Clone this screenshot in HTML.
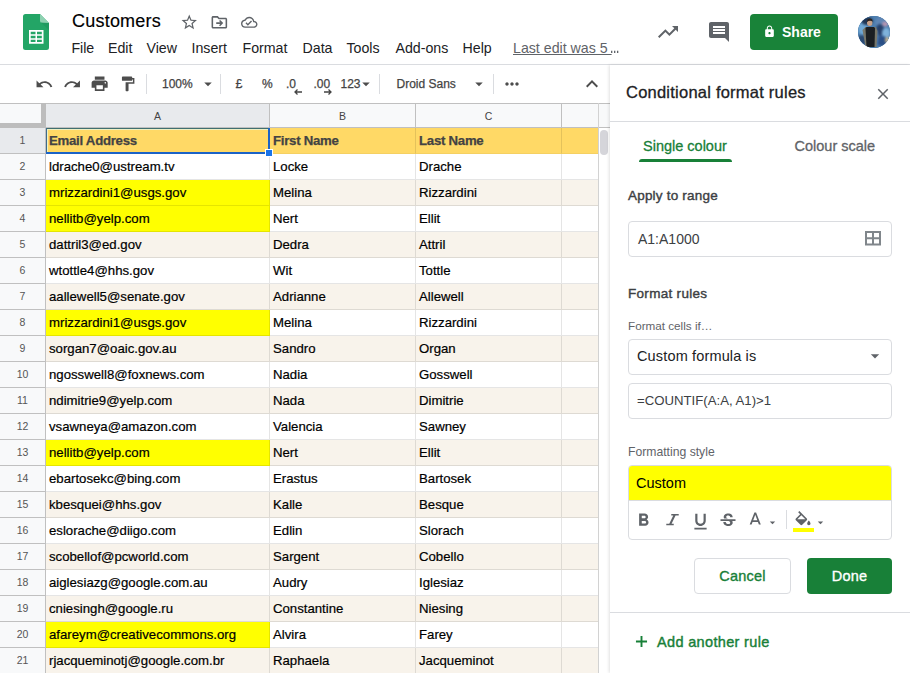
<!DOCTYPE html>
<html lang="en">
<head>
<meta charset="utf-8">
<title>Customers</title>
<style>
*{box-sizing:border-box;margin:0;padding:0}
html,body{width:910px;height:673px;overflow:hidden;background:#fff}
body{font-family:"Liberation Sans",sans-serif;color:#202124;position:relative}
.abs{position:absolute}
svg{display:block;overflow:visible}
#hdr{left:0;top:0;width:910px;height:65px;background:#fff;border-bottom:1px solid #dadce0}
#title{left:72px;top:10px;font-size:18px;line-height:22px;color:#000;white-space:nowrap;letter-spacing:.22px;-webkit-text-stroke:.15px #000}
.menu{top:39px;font-size:14.2px;line-height:18px;color:#202124;white-space:nowrap}
#lastedit{left:513px;top:39px;font-size:14.2px;line-height:18px;color:#5f6368;white-space:pre}
#share{left:750px;top:14px;width:88px;height:36px;background:#198339;border-radius:4px;color:#fff;font-weight:bold;font-size:14px;line-height:36px}
#share span{position:absolute;left:32px;top:0}
#avatar{left:858px;top:16px;width:32px;height:32px;border-radius:50%;overflow:hidden;background:#4a6c8c}
#tb{left:0;top:65px;width:610px;height:38px;background:#fff}
.tbt{top:76px;font-size:12px;line-height:16px;color:#444;white-space:nowrap;-webkit-text-stroke:.25px #444}
.sep{top:74px;width:1px;height:20px;background:#dadce0}
#grid{left:0;top:103px;width:610px;height:570px;background:#fff;overflow:hidden}
.colh{top:0;height:25px;background:#f8f9fa;border-right:1px solid #c0c0c0;border-top:1px solid #c0c0c0;border-bottom:1px solid #c0c0c0;font-size:10.500px;color:#444;text-align:center;line-height:24px}
.rowh{left:0;width:46px;height:26px;background:#f8f9fa;border-right:1px solid #c0c0c0;border-bottom:1px solid #c0c0c0;font-size:10.500px;color:#555;text-align:center;line-height:25px}
.cell{height:26px;border-right:1px solid rgba(0,0,0,.1);border-bottom:1px solid rgba(0,0,0,.1);font-size:13.2px;line-height:25px;padding-left:3px;color:#000;white-space:nowrap;overflow:hidden;-webkit-text-stroke:.2px #000}
.cell.h{font-weight:bold;color:#434343;background:#ffd966;letter-spacing:-.25px;-webkit-text-stroke:.25px #434343;border-bottom-color:rgba(0,0,0,.04)}
.cell.b{background:#f8f3eb}
.cell.y{background:#ffff00}
#side{left:610px;top:65px;width:300px;height:608px;background:#fff;box-shadow:-1px 0 3px rgba(0,0,0,.12)}
.sl{font-size:12px;color:#5f6368;white-space:nowrap}
.box{border:1px solid #dadce0;border-radius:4px;background:#fff}
</style>
</head>
<body>
<div id="hdr" class="abs"></div>

<svg class="abs" style="left:23px;top:14px" width="26" height="36" viewBox="0 0 26 36">
<path d="M2.5 0H17l9 9v24.5a2.500 2.500 0 0 1-2.500 2.500h-21A2.500 2.500 0 0 1 0 33.500v-31A2.500 2.500 0 0 1 2.500 0z" fill="#23a566"/>
<path d="M17 0l9 9h-6.500A2.500 2.500 0 0 1 17 6.500z" fill="#8ed1b1"/>
<path d="M17.700 8.300L26 16V9z" fill="#1c8f5a" opacity=".5"/>
<path d="M6 16v13.800h14.500V16zm1.700 1.700h4.800v2.470H7.700zm6.300 0h4.800v2.470H14zm-6.300 3.970h4.800v2.470H7.700zm6.300 0h4.800v2.470H14zm-6.300 3.960h4.800v2.470H7.700zm6.300 0h4.800v2.470H14z" fill="#fff" fill-rule="evenodd"/>
</svg>
<div id="title" class="abs">Customers</div>
<svg class="abs" style="left:179.7px;top:12.6px" width="18.5" height="18.5" viewBox="0 0 24 24" ><path fill="#5f6368" d="M22 9.24l-7.19-.62L12 2 9.19 8.63 2 9.24l5.46 4.73L5.82 21 12 17.27 18.18 21l-1.63-7.03L22 9.24zM12 15.4l-3.76 2.27 1-4.28-3.32-2.88 4.38-.38L12 6.1l1.71 4.04 4.38.38-3.32 2.88 1 4.28L12 15.4z"/></svg>
<svg class="abs" style="left:209.5px;top:12.8px" width="18.7" height="18.7" viewBox="0 0 24 24" ><path fill="#5f6368" d="M20 6h-8l-2-2H4c-1.1 0-2 .9-2 2v12c0 1.1.9 2 2 2h16c1.1 0 2-.9 2-2V8c0-1.1-.9-2-2-2zm0 12H4V6h5.17l2 2H20v10zM8 12h5.2l-1.6-1.6L13 9l4 4-4 4-1.4-1.4 1.6-1.6H8z"/></svg>
<svg class="abs" style="left:240.6px;top:14.2px" width="16.5" height="16.5" viewBox="0 0 24 24" ><path fill="#5f6368" d="M19.35 10.04C18.67 6.59 15.64 4 12 4 9.11 4 6.6 5.64 5.35 8.04 2.34 8.36 0 10.91 0 14c0 3.31 2.69 6 6 6h13c2.76 0 5-2.24 5-5 0-2.64-2.05-4.78-4.65-4.96zM19 18H6c-2.21 0-4-1.79-4-4 0-2.05 1.53-3.76 3.56-3.97l1.07-.11.5-.95C8.08 7.14 9.94 6 12 6c2.62 0 4.88 1.86 5.39 4.43l.3 1.5 1.53.11c1.56.1 2.78 1.41 2.78 2.96 0 1.65-1.35 3-3 3zm-9-3.82l-2.09-2.09L6.5 13.5 10 17l6.01-6.01-1.41-1.41z"/></svg>
<div class="abs menu" style="left:71.4px">File</div>
<div class="abs menu" style="left:108px">Edit</div>
<div class="abs menu" style="left:146.5px">View</div>
<div class="abs menu" style="left:191.5px">Insert</div>
<div class="abs menu" style="left:242.5px">Format</div>
<div class="abs menu" style="left:302.5px">Data</div>
<div class="abs menu" style="left:346.5px">Tools</div>
<div class="abs menu" style="left:395.5px">Add-ons</div>
<div class="abs menu" style="left:462.5px">Help</div>
<div id="lastedit" class="abs"><span style="text-decoration:underline">Last edit was 5 </span><span style="display:inline-block;transform:scaleX(.66);transform-origin:0 50%;margin-left:-2px;font-weight:bold">…</span></div>
<svg class="abs" style="left:656px;top:20px" width="24" height="24" viewBox="0 0 24 24" ><path fill="#5f6368" d="M16 6l2.29 2.29-4.88 4.88-4-4L2 16.59 3.41 18l6-6 4 4 6.3-6.29L22 12V6z"/></svg>
<svg class="abs" style="left:707px;top:20px" width="24" height="24" viewBox="0 0 24 24" ><path fill="#5f6368" d="M21.99 4c0-1.1-.89-2-1.99-2H4c-1.1 0-2 .9-2 2v12c0 1.1.9 2 2 2h14l4 4-.01-18zM18 14H6v-2h12v2zm0-3H6V9h12v2zm0-3H6V6h12v2z"/></svg>
<div id="share" class="abs"><svg class="abs" style="left:13px;top:11px" width="13" height="13" viewBox="0 0 24 24"><path fill="#fff" d="M18 8h-1V6c0-2.76-2.24-5-5-5S7 3.24 7 6v2H6c-1.1 0-2 .9-2 2v10c0 1.1.9 2 2 2h12c1.1 0 2-.9 2-2V10c0-1.1-.9-2-2-2zm-6 9c-1.1 0-2-.9-2-2s.9-2 2-2 2 .9 2 2-.9 2-2 2zm3.1-9H8.9V6c0-1.71 1.39-3.1 3.1-3.1 1.71 0 3.1 1.39 3.1 3.1v2z"/></svg><span>Share</span></div>
<div id="avatar" class="abs"><svg width="32" height="32" viewBox="0 0 32 32"><rect width="32" height="32" fill="#4d7fb0"/><g style="filter:blur(.8px)">
<ellipse cx="5" cy="12" rx="5" ry="7" fill="#6fa8d6"/><ellipse cx="4" cy="24" rx="5" ry="5" fill="#2b4a73"/><ellipse cx="9" cy="5" rx="6" ry="4" fill="#1f3554"/>
<ellipse cx="24" cy="6" rx="7" ry="5" fill="#5f86b5"/><ellipse cx="27" cy="8" rx="3" ry="2.500" fill="#b595b0"/><ellipse cx="22" cy="14" rx="4" ry="6" fill="#27416b"/>
<ellipse cx="28" cy="17" rx="4" ry="5" fill="#7fb3dc"/><ellipse cx="24" cy="25" rx="6" ry="5" fill="#2a4f86"/><ellipse cx="29" cy="24" rx="2" ry="3" fill="#c8b48f"/><ellipse cx="18.500" cy="22" rx="2" ry="8" fill="#4f79a8"/></g>
<path d="M4.500 14l3-3h10.500l1.500 4-1 16h-11z" fill="#77776b"/>
<path d="M7.500 12.500c0-1 1-1.500 2-1.500h5.500c1 0 2 .5 2 1.500l-.5 18.500h-8z" fill="#1b1f23"/>
<ellipse cx="11.700" cy="6.700" rx="2.700" ry="3.300" fill="#c7a189"/><path d="M8.800 6.200c0-2.500 1.300-3.700 3-3.700s3 1.200 2.800 3.300c-1.500-1.300-4-1.300-5.800.4z" fill="#2b2420"/>
</svg></div>
<div id="tb" class="abs"></div>
<svg class="abs" style="left:34.75px;top:74.75px" width="18.5" height="18.5" viewBox="0 0 24 24" ><path fill="#4d4d4d" d="M12.5 8c-2.65 0-5.05.99-6.9 2.6L2 7v9h9l-3.62-3.62c1.39-1.16 3.16-1.88 5.12-1.88 3.54 0 6.55 2.31 7.6 5.5l2.37-.78C21.08 11.03 17.15 8 12.5 8z"/></svg>
<svg class="abs" style="left:62.95px;top:74.75px" width="18.5" height="18.5" viewBox="0 0 24 24" ><path fill="#4d4d4d" d="M18.4 10.6C16.55 8.99 14.15 8 11.5 8c-4.65 0-8.58 3.03-9.96 7.22L3.9 16c1.05-3.19 4.05-5.5 7.6-5.5 1.95 0 3.73.72 5.12 1.88L13 16h9V7l-3.6 3.6z"/></svg>
<svg class="abs" style="left:90.35px;top:74.2px" width="19.3" height="19.3" viewBox="0 0 24 24" ><path fill="#4d4d4d" d="M19 8H5c-1.66 0-3 1.34-3 3v6h4v4h12v-4h4v-6c0-1.66-1.34-3-3-3zm-3 11H8v-5h8v5zm3-7c-.55 0-1-.45-1-1s.45-1 1-1 1 .45 1 1-.45 1-1 1zm-1-9H6v4h12V3z"/></svg>
<svg class="abs" style="left:119.3px;top:75.2px" width="17.6" height="17.6" viewBox="0 0 24 24" ><path fill="#4d4d4d" d="M18 4V3c0-.55-.45-1-1-1H5c-.55 0-1 .45-1 1v4c0 .55.45 1 1 1h12c.55 0 1-.45 1-1V6h1v4H9v11c0 .55.45 1 1 1h2c.55 0 1-.45 1-1v-9h8V4h-3z"/></svg>
<div class="abs sep" style="left:146px"></div>
<div class="abs tbt" style="left:162px">100%</div>
<svg class="abs" style="left:199px;top:75px" width="18" height="18" viewBox="0 0 24 24" ><path fill="#4d4d4d" d="M7 10l5 5 5-5z"/></svg>
<div class="abs sep" style="left:220px"></div>
<div class="abs tbt" style="left:235.500px;font-size:12.500px">£</div>
<div class="abs tbt" style="left:262px">%</div>
<div class="abs tbt" style="left:286px">.0</div>
<svg class="abs" style="left:293px;top:88px" width="10" height="8" viewBox="0 0 10 8"><path d="M9 4H2M4.500 1.500L2 4l2.500 2.500" stroke="#444" stroke-width="1.300" fill="none"/></svg>
<div class="abs tbt" style="left:313.500px">.00</div>
<svg class="abs" style="left:323px;top:88px" width="10" height="8" viewBox="0 0 10 8"><path d="M1 4h7M5.500 1.500L8 4 5.500 6.500" stroke="#444" stroke-width="1.300" fill="none"/></svg>
<div class="abs tbt" style="left:340.500px">123</div>
<svg class="abs" style="left:357px;top:75px" width="18" height="18" viewBox="0 0 24 24" ><path fill="#4d4d4d" d="M7 10l5 5 5-5z"/></svg>
<div class="abs sep" style="left:379px"></div>
<div class="abs tbt" style="left:396.500px">Droid Sans</div>
<svg class="abs" style="left:470px;top:75px" width="18" height="18" viewBox="0 0 24 24" ><path fill="#4d4d4d" d="M7 10l5 5 5-5z"/></svg>
<div class="abs sep" style="left:493px"></div>
<svg class="abs" style="left:502px;top:74px" width="20" height="20" viewBox="0 0 24 24" ><path fill="#4d4d4d" d="M6 10c-1.1 0-2 .9-2 2s.9 2 2 2 2-.9 2-2-.9-2-2-2zm12 0c-1.1 0-2 .9-2 2s.9 2 2 2 2-.9 2-2-.9-2-2-2zm-6 0c-1.1 0-2 .9-2 2s.9 2 2 2 2-.9 2-2-.9-2-2-2z"/></svg>
<svg class="abs" style="left:580px;top:72px" width="24" height="24" viewBox="0 0 24 24" ><path fill="#4d4d4d" d="M12 8l-6 6 1.41 1.41L12 10.83l4.59 4.58L18 14z"/></svg>
<div id="grid" class="abs">
<div class="abs" style="left:0;top:0;width:46px;height:25px;background:#f8f9fa;border-top:1px solid #c0c0c0"></div>
<div class="abs" style="left:41px;top:0;width:5px;height:25px;background:#bdbdbd"></div>
<div class="abs" style="left:0;top:20px;width:46px;height:5px;background:#bdbdbd"></div>
<div class="abs colh" style="left:46px;width:224px;background:#e8eaed">A</div>
<div class="abs colh" style="left:270px;width:146px">B</div>
<div class="abs colh" style="left:416px;width:146px">C</div>
<div class="abs colh" style="left:562px;width:37px"></div>
<div class="abs rowh" style="top:25px;background:#e8eaed">1</div>
<div class="abs cell h" style="left:46px;top:25px;width:224px">Email Address</div>
<div class="abs cell h" style="left:270px;top:25px;width:146px">First Name</div>
<div class="abs cell h" style="left:416px;top:25px;width:146px">Last Name</div>
<div class="abs cell h" style="left:562px;top:25px;width:37px"></div>
<div class="abs rowh" style="top:51px">2</div>
<div class="abs cell" style="left:46px;top:51px;width:224px">ldrache0@ustream.tv</div>
<div class="abs cell" style="left:270px;top:51px;width:146px">Locke</div>
<div class="abs cell" style="left:416px;top:51px;width:146px">Drache</div>
<div class="abs cell" style="left:562px;top:51px;width:37px"></div>
<div class="abs rowh" style="top:77px">3</div>
<div class="abs cell b y" style="left:46px;top:77px;width:224px">mrizzardini1@usgs.gov</div>
<div class="abs cell b" style="left:270px;top:77px;width:146px">Melina</div>
<div class="abs cell b" style="left:416px;top:77px;width:146px">Rizzardini</div>
<div class="abs cell b" style="left:562px;top:77px;width:37px"></div>
<div class="abs rowh" style="top:103px">4</div>
<div class="abs cell y" style="left:46px;top:103px;width:224px">nellitb@yelp.com</div>
<div class="abs cell" style="left:270px;top:103px;width:146px">Nert</div>
<div class="abs cell" style="left:416px;top:103px;width:146px">Ellit</div>
<div class="abs cell" style="left:562px;top:103px;width:37px"></div>
<div class="abs rowh" style="top:129px">5</div>
<div class="abs cell b" style="left:46px;top:129px;width:224px">dattril3@ed.gov</div>
<div class="abs cell b" style="left:270px;top:129px;width:146px">Dedra</div>
<div class="abs cell b" style="left:416px;top:129px;width:146px">Attril</div>
<div class="abs cell b" style="left:562px;top:129px;width:37px"></div>
<div class="abs rowh" style="top:155px">6</div>
<div class="abs cell" style="left:46px;top:155px;width:224px">wtottle4@hhs.gov</div>
<div class="abs cell" style="left:270px;top:155px;width:146px">Wit</div>
<div class="abs cell" style="left:416px;top:155px;width:146px">Tottle</div>
<div class="abs cell" style="left:562px;top:155px;width:37px"></div>
<div class="abs rowh" style="top:181px">7</div>
<div class="abs cell b" style="left:46px;top:181px;width:224px">aallewell5@senate.gov</div>
<div class="abs cell b" style="left:270px;top:181px;width:146px">Adrianne</div>
<div class="abs cell b" style="left:416px;top:181px;width:146px">Allewell</div>
<div class="abs cell b" style="left:562px;top:181px;width:37px"></div>
<div class="abs rowh" style="top:207px">8</div>
<div class="abs cell y" style="left:46px;top:207px;width:224px">mrizzardini1@usgs.gov</div>
<div class="abs cell" style="left:270px;top:207px;width:146px">Melina</div>
<div class="abs cell" style="left:416px;top:207px;width:146px">Rizzardini</div>
<div class="abs cell" style="left:562px;top:207px;width:37px"></div>
<div class="abs rowh" style="top:233px">9</div>
<div class="abs cell b" style="left:46px;top:233px;width:224px">sorgan7@oaic.gov.au</div>
<div class="abs cell b" style="left:270px;top:233px;width:146px">Sandro</div>
<div class="abs cell b" style="left:416px;top:233px;width:146px">Organ</div>
<div class="abs cell b" style="left:562px;top:233px;width:37px"></div>
<div class="abs rowh" style="top:259px">10</div>
<div class="abs cell" style="left:46px;top:259px;width:224px">ngosswell8@foxnews.com</div>
<div class="abs cell" style="left:270px;top:259px;width:146px">Nadia</div>
<div class="abs cell" style="left:416px;top:259px;width:146px">Gosswell</div>
<div class="abs cell" style="left:562px;top:259px;width:37px"></div>
<div class="abs rowh" style="top:285px">11</div>
<div class="abs cell b" style="left:46px;top:285px;width:224px">ndimitrie9@yelp.com</div>
<div class="abs cell b" style="left:270px;top:285px;width:146px">Nada</div>
<div class="abs cell b" style="left:416px;top:285px;width:146px">Dimitrie</div>
<div class="abs cell b" style="left:562px;top:285px;width:37px"></div>
<div class="abs rowh" style="top:311px">12</div>
<div class="abs cell" style="left:46px;top:311px;width:224px">vsawneya@amazon.com</div>
<div class="abs cell" style="left:270px;top:311px;width:146px">Valencia</div>
<div class="abs cell" style="left:416px;top:311px;width:146px">Sawney</div>
<div class="abs cell" style="left:562px;top:311px;width:37px"></div>
<div class="abs rowh" style="top:337px">13</div>
<div class="abs cell b y" style="left:46px;top:337px;width:224px">nellitb@yelp.com</div>
<div class="abs cell b" style="left:270px;top:337px;width:146px">Nert</div>
<div class="abs cell b" style="left:416px;top:337px;width:146px">Ellit</div>
<div class="abs cell b" style="left:562px;top:337px;width:37px"></div>
<div class="abs rowh" style="top:363px">14</div>
<div class="abs cell" style="left:46px;top:363px;width:224px">ebartosekc@bing.com</div>
<div class="abs cell" style="left:270px;top:363px;width:146px">Erastus</div>
<div class="abs cell" style="left:416px;top:363px;width:146px">Bartosek</div>
<div class="abs cell" style="left:562px;top:363px;width:37px"></div>
<div class="abs rowh" style="top:389px">15</div>
<div class="abs cell b" style="left:46px;top:389px;width:224px">kbesquei@hhs.gov</div>
<div class="abs cell b" style="left:270px;top:389px;width:146px">Kalle</div>
<div class="abs cell b" style="left:416px;top:389px;width:146px">Besque</div>
<div class="abs cell b" style="left:562px;top:389px;width:37px"></div>
<div class="abs rowh" style="top:415px">16</div>
<div class="abs cell" style="left:46px;top:415px;width:224px">eslorache@diigo.com</div>
<div class="abs cell" style="left:270px;top:415px;width:146px">Edlin</div>
<div class="abs cell" style="left:416px;top:415px;width:146px">Slorach</div>
<div class="abs cell" style="left:562px;top:415px;width:37px"></div>
<div class="abs rowh" style="top:441px">17</div>
<div class="abs cell b" style="left:46px;top:441px;width:224px">scobellof@pcworld.com</div>
<div class="abs cell b" style="left:270px;top:441px;width:146px">Sargent</div>
<div class="abs cell b" style="left:416px;top:441px;width:146px">Cobello</div>
<div class="abs cell b" style="left:562px;top:441px;width:37px"></div>
<div class="abs rowh" style="top:467px">18</div>
<div class="abs cell" style="left:46px;top:467px;width:224px">aiglesiazg@google.com.au</div>
<div class="abs cell" style="left:270px;top:467px;width:146px">Audry</div>
<div class="abs cell" style="left:416px;top:467px;width:146px">Iglesiaz</div>
<div class="abs cell" style="left:562px;top:467px;width:37px"></div>
<div class="abs rowh" style="top:493px">19</div>
<div class="abs cell b" style="left:46px;top:493px;width:224px">cniesingh@google.ru</div>
<div class="abs cell b" style="left:270px;top:493px;width:146px">Constantine</div>
<div class="abs cell b" style="left:416px;top:493px;width:146px">Niesing</div>
<div class="abs cell b" style="left:562px;top:493px;width:37px"></div>
<div class="abs rowh" style="top:519px">20</div>
<div class="abs cell y" style="left:46px;top:519px;width:224px">afareym@creativecommons.org</div>
<div class="abs cell" style="left:270px;top:519px;width:146px">Alvira</div>
<div class="abs cell" style="left:416px;top:519px;width:146px">Farey</div>
<div class="abs cell" style="left:562px;top:519px;width:37px"></div>
<div class="abs rowh" style="top:545px">21</div>
<div class="abs cell b" style="left:46px;top:545px;width:224px">rjacqueminotj@google.com.br</div>
<div class="abs cell b" style="left:270px;top:545px;width:146px">Raphaela</div>
<div class="abs cell b" style="left:416px;top:545px;width:146px">Jacqueminot</div>
<div class="abs cell b" style="left:562px;top:545px;width:37px"></div>
<div class="abs" style="left:46px;top:25px;width:224px;height:1px;background:#3f6f70"></div>
<div class="abs" style="left:47px;top:26px;width:222px;height:1px;background:#eef0c4"></div>
<div class="abs" style="left:46px;top:25px;width:1px;height:26px;background:#3f6b8c"></div>
<div class="abs" style="left:47px;top:26px;width:1px;height:23px;background:#eef0c4"></div>
<div class="abs" style="left:268px;top:25px;width:2px;height:26px;background:#1b63c7"></div>
<div class="abs" style="left:46px;top:49px;width:224px;height:2px;background:#1b63c7"></div>
<div class="abs" style="left:265px;top:46px;width:8px;height:8px;background:#1a73e8;border:1px solid #fff"></div>
<div class="abs" style="left:598px;top:0;width:12px;height:570px;background:#fff;border-left:1px solid #d2d2d2"></div>
<div class="abs" style="left:599px;top:0;width:11px;height:25px;background:#f8f9fa;border-top:1px solid #c0c0c0;border-bottom:1px solid #c0c0c0"></div>
<div class="abs" style="left:600px;top:27px;width:8px;height:25px;border-radius:4px;background:#d5d5da"></div>
</div>
<div id="side" class="abs">
<div class="abs" style="left:16px;top:16px;font-size:16.500px;line-height:22px;color:#202124;white-space:nowrap;letter-spacing:.23px;-webkit-text-stroke:.3px #202124">Conditional format rules</div>
<svg class="abs" style="left:264px;top:20px" width="18" height="18" viewBox="0 0 24 24" ><path fill="#5f6368" d="M19 6.41L17.59 5 12 10.59 6.41 5 5 6.41 10.59 12 5 17.59 6.41 19 12 13.41 17.59 19 19 17.59 13.41 12z"/></svg>
<div class="abs" style="left:0;top:56px;width:300px;height:1px;background:#dadce0"></div>
<div class="abs" style="left:33px;top:72px;font-size:14.500px;line-height:18px;color:#188038;white-space:nowrap;-webkit-text-stroke:.3px #188038">Single colour</div>
<div class="abs" style="left:29px;top:94px;width:92.500px;height:3px;border-radius:3px 3px 0 0;background:#188038"></div>
<div class="abs" style="left:184.500px;top:72px;font-size:14.500px;line-height:18px;color:#5f6368;white-space:nowrap;-webkit-text-stroke:.3px #5f6368">Colour scale</div>
<div class="abs" style="left:18px;top:122.700px;font-size:13.500px;line-height:16px;color:#3c4043;white-space:nowrap;letter-spacing:.2px;-webkit-text-stroke:.4px #3c4043">Apply to range</div>
<div class="abs box" style="left:18px;top:156px;width:264px;height:36px"></div>
<div class="abs" style="left:28px;top:165px;font-size:14px;line-height:18px;color:#3c4043;white-space:nowrap">A1:A1000</div>
<svg class="abs" style="left:255px;top:166.400px" width="16" height="14.400" viewBox="0 0 16 14.400"><path d="M1 1h14v12.400H1zM8 1v12.400M1 7.200h14" stroke="#80868b" stroke-width="2" fill="none"/></svg>
<div class="abs" style="left:18px;top:220.700px;font-size:13.500px;line-height:16px;color:#3c4043;white-space:nowrap;letter-spacing:.3px;-webkit-text-stroke:.4px #3c4043">Format rules</div>
<div class="abs sl" style="left:18px;top:254px;line-height:14px;font-size:11.700px">Format cells if…</div>
<div class="abs box" style="left:18px;top:274px;width:264px;height:36px"></div>
<div class="abs" style="left:27px;top:282px;font-size:14.500px;line-height:18px;color:#202124;white-space:nowrap;letter-spacing:.15px">Custom formula is</div>
<svg class="abs" style="left:255px;top:281px" width="20" height="20" viewBox="0 0 24 24" ><path fill="#5f6368" d="M7 10l5 5 5-5z"/></svg>
<div class="abs box" style="left:18px;top:318px;width:264px;height:36px"></div>
<div class="abs" style="left:27px;top:327px;font-size:13.200px;line-height:18px;color:#3c4043;white-space:nowrap">=COUNTIF(A:A, A1)&gt;1</div>
<div class="abs sl" style="left:18px;top:380px;line-height:14px;font-size:12.200px">Formatting style</div>
<div class="abs box" style="left:18px;top:400px;width:264px;height:75px;overflow:hidden"><div style="height:35px;background:#ffff00;border-bottom:1px solid #dadce0"></div></div>
<div class="abs" style="left:26px;top:409px;font-size:14.500px;line-height:18px;color:#000;white-space:nowrap">Custom</div>
<svg class="abs" style="left:22.65px;top:445.1px" width="21" height="21" viewBox="0 0 24 24" ><path fill="#5f6368" d="M15.6 10.79c.97-.67 1.65-1.77 1.65-2.79 0-2.26-1.75-4-4-4H7v14h7.04c2.09 0 3.71-1.7 3.71-3.79 0-1.52-.86-2.82-2.15-3.42zM10 6.5h3c.83 0 1.5.67 1.5 1.5s-.67 1.5-1.5 1.5h-3v-3zm3.5 9H10v-3h3.5c.83 0 1.5.67 1.5 1.5s-.67 1.5-1.5 1.5z"/></svg>
<svg class="abs" style="left:51.8px;top:445.25px" width="21" height="21" viewBox="0 0 24 24" ><path fill="#5f6368" d="M10.600 4.700h8.500v1.600H15.500l-4.560 9.400h2.460v1.600H4.900v-1.600H8.300l4.560-9.400H10.600z"/></svg>
<svg class="abs" style="left:79.7px;top:446px" width="21" height="21" viewBox="0 0 24 24" ><path fill="#5f6368" d="M12 17c3.31 0 6-2.69 6-6V3h-2.5v8c0 1.93-1.57 3.5-3.5 3.5S8.5 12.93 8.5 11V3H6v8c0 3.31 2.69 6 6 6zm-7 2v2h14v-2H5z"/></svg>
<svg class="abs" style="left:108.2px;top:446.2px" width="20" height="20" viewBox="0 0 24 24" ><path fill="#5f6368" d="M7.24 8.75c-.26-.48-.39-1.03-.39-1.67 0-.61.13-1.16.4-1.67.26-.5.63-.93 1.11-1.29.48-.35 1.05-.63 1.7-.83.66-.19 1.39-.29 2.18-.29.81 0 1.54.11 2.21.34.66.22 1.23.54 1.69.94.47.4.83.88 1.08 1.43.25.55.38 1.15.38 1.81h-3.01c0-.31-.05-.59-.15-.85-.09-.27-.24-.49-.44-.68-.2-.19-.45-.33-.75-.44-.3-.1-.66-.16-1.06-.16-.39 0-.74.04-1.03.13-.29.09-.53.21-.72.36-.19.16-.34.34-.44.55-.1.21-.15.43-.15.66 0 .48.25.88.74 1.21.38.25.77.48 1.41.7H7.39c-.05-.08-.11-.17-.15-.25zM21 12v-2H3v2h9.620c.18.07.4.14.55.2.37.17.66.34.87.51.21.17.35.36.43.57.07.2.11.43.11.69 0 .23-.05.45-.14.66-.09.2-.23.38-.42.53-.19.15-.42.26-.71.35-.29.08-.63.13-1.01.13-.43 0-.83-.04-1.18-.13s-.66-.23-.91-.42c-.25-.19-.45-.44-.59-.75-.14-.31-.25-.76-.25-1.21H6.4c0 .55.08 1.13.24 1.58.16.45.37.85.65 1.21.28.35.6.66.98.92.37.26.78.48 1.220.65.44.17.9.3 1.38.39.48.08.96.13 1.44.13.8 0 1.53-.09 2.18-.28s1.21-.45 1.67-.79c.46-.34.82-.77 1.07-1.27s.38-1.07.38-1.71c0-.6-.1-1.14-.31-1.610-.05-.11-.11-.23-.17-.33H21z"/></svg>
<svg class="abs" style="left:134.95px;top:444.9px" width="20.5" height="20.5" viewBox="0 0 24 24" ><path fill="#5f6368" d="M11 3L5.5 17h2.25l1.12-3h6.25l1.12 3h2.25L13 3h-2zm-1.380 9L12 5.670 14.380 12H9.620z"/></svg>
<svg class="abs" style="left:155.9px;top:450.6px" width="13" height="13" viewBox="0 0 24 24" ><path fill="#5f6368" d="M7 10l5 5 5-5z"/></svg>
<div class="abs" style="left:176px;top:445px;width:1px;height:19px;background:#dadce0"></div>
<svg class="abs" style="left:183.1px;top:445.8px" width="20" height="20" viewBox="0 0 24 24" ><path fill="#5f6368" d="M16.56 8.94L7.62 0 6.21 1.41l2.38 2.38-5.15 5.15c-.59.59-.59 1.54 0 2.12l5.5 5.5c.29.29.68.44 1.06.44s.77-.15 1.06-.44l5.5-5.5c.59-.58.59-1.53 0-2.12zM5.21 10L10 5.21 14.79 10H5.21zM19 11.5s-2 2.17-2 3.5c0 1.1.9 2 2 2s2-.9 2-2c0-1.33-2-3.500-2-3.500z"/></svg>
<div class="abs" style="left:183px;top:463px;width:21px;height:4px;background:#ffff00"></div>
<svg class="abs" style="left:204.1px;top:450.6px" width="13" height="13" viewBox="0 0 24 24" ><path fill="#5f6368" d="M7 10l5 5 5-5z"/></svg>
<div class="abs box" style="left:84px;top:493px;width:97px;height:36px"></div>
<div class="abs" style="left:84px;top:493px;width:97px;height:36px;text-align:center;font-size:14.500px;line-height:36px;color:#188038;letter-spacing:.2px;-webkit-text-stroke:.35px #188038">Cancel</div>
<div class="abs" style="left:197px;top:493px;width:85px;height:36px;border-radius:4px;background:#188038;text-align:center;font-size:14.500px;line-height:36px;color:#fff;letter-spacing:.15px;-webkit-text-stroke:.35px #fff">Done</div>
<div class="abs" style="left:0;top:547px;width:300px;height:1px;background:#dadce0"></div>
<svg class="abs" style="left:22px;top:566.7px" width="19" height="19" viewBox="0 0 24 24" ><path fill="#188038" d="M19 13.200h-5.800V19h-2.400v-5.800H5v-2.400h5.800V5h2.400v5.800H19z"/></svg>
<div class="abs" style="left:47px;top:568px;font-size:14.500px;line-height:18px;color:#188038;white-space:nowrap;letter-spacing:.34px;-webkit-text-stroke:.4px #188038">Add another rule</div>
</div>
</body>
</html>
